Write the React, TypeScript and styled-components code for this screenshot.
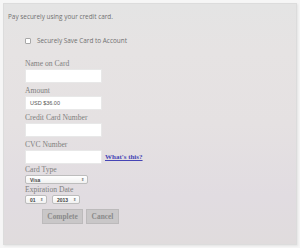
import React from "react";
import styled, { createGlobalStyle } from "styled-components";

const Global = createGlobalStyle`
  html, body { margin: 0; padding: 0; background: #f6f6f6; }
  body { width: 300px; height: 248px; overflow: hidden; }
`;

const Panel = styled.div`
  box-sizing: border-box;
  margin: 3px 0 0 3px;
  width: 294px;
  height: 242px;
  border: 1px solid #dcdcdc;
  background: linear-gradient(180deg, #e4e4e4 0%, #e6e3e3 20%, #e5e1e2 50%, #e1dce1 80%, #e0dcdd 100%);
  box-shadow: 1px 1px 2px rgba(0,0,0,0.08);
  padding: 8px 0 0 4px;
  display: flex;
  flex-direction: column;
`;

const Intro = styled.div`
  font-family: "Open Sans", "Noto Sans", sans-serif;
  font-size: 6.4px;
  color: #707070;
  line-height: 9px;
`;

const Form = styled.div`
  display: flex;
  flex-direction: column;
  padding-left: 17px;
`;

const SaveRow = styled.label`
  display: flex;
  align-items: center;
  gap: 6px;
  margin-top: 15px;
  font-family: "Open Sans", "Noto Sans", sans-serif;
  font-size: 6.4px;
  color: #707070;
  height: 9px;
`;

const Box = styled.span`
  box-sizing: border-box;
  width: 6px;
  height: 6px;
  border: 1px solid #a8a8a8;
  background: #fff;
  border-radius: 1px;
`;

const Label = styled.div<{ $top: number }>`
  font-family: "Liberation Serif", serif;
  font-size: 7.6px;
  color: #808080;
  line-height: 9px;
  margin-top: ${(p) => p.$top}px;
`;

const FieldRow = styled.div`
  display: flex;
  align-items: center;
  gap: 3px;
  margin-top: 1px;
`;

const Input = styled.div`
  box-sizing: border-box;
  width: 77px;
  height: 14px;
  background: #fff;
  border: 1px solid #e8e8e8;
  font-family: "Liberation Sans", sans-serif;
  font-size: 5.5px;
  color: #555;
  padding-left: 4px;
  display: flex;
  align-items: center;
`;

const Link = styled.a`
  font-family: "Liberation Serif", serif;
  font-weight: bold;
  font-size: 7px;
  color: #4545b5;
  text-decoration: underline;
`;

const Select = styled.div<{ $w: number }>`
  box-sizing: border-box;
  width: ${(p) => p.$w}px;
  height: 9px;
  background: linear-gradient(#ffffff, #f1f1f1);
  border: 1px solid #bdbdbd;
  border-radius: 2px;
  font-family: "Liberation Sans", sans-serif;
  font-weight: bold;
  font-size: 5px;
  color: #444;
  display: flex;
  align-items: center;
  justify-content: space-between;
  padding: 0 3px 0 4px;
`;

const Arrows = styled.span`
  font-size: 4px;
  color: #777;
  line-height: 1;
`;

const SelectRow = styled.div`
  display: flex;
  gap: 5px;
  margin-top: 1px;
`;

const Buttons = styled.div`
  display: flex;
  gap: 3px;
  margin-top: 5px;
  margin-left: 34px;
`;

const Button = styled.div<{ $w: number }>`
  box-sizing: border-box;
  width: ${(p) => p.$w}px;
  height: 15px;
  background: #c9c7c8;
  border: 1px solid #bcbabb;
  font-family: "Liberation Serif", serif;
  font-weight: bold;
  font-size: 7.4px;
  color: #8a8a8a;
  display: flex;
  align-items: center;
  justify-content: center;
`;

const SelectBox = ({ w, value }: { w: number; value: string }) => (
  <Select $w={w}>
    <span>{value}</span>
    <Arrows>⇕</Arrows>
  </Select>
);

export default function App() {
  return (
    <>
      <Global />
      <Panel>
        <Intro>Pay securely using your credit card.</Intro>
        <Form>
          <SaveRow>
            <Box />
            Securely Save Card to Account
          </SaveRow>
          <Label $top={14}>Name on Card</Label>
          <FieldRow>
            <Input />
          </FieldRow>
          <Label $top={3}>Amount</Label>
          <FieldRow>
            <Input>USD $36.00</Input>
          </FieldRow>
          <Label $top={3}>Credit Card Number</Label>
          <FieldRow>
            <Input />
          </FieldRow>
          <Label $top={3}>CVC Number</Label>
          <FieldRow>
            <Input />
            <Link href="#">What's this?</Link>
          </FieldRow>
          <Label $top={1}>Card Type</Label>
          <SelectRow>
            <SelectBox w={63} value="Visa" />
          </SelectRow>
          <Label $top={1}>Expiration Date</Label>
          <SelectRow>
            <SelectBox w={22} value="01" />
            <SelectBox w={28} value="2013" />
          </SelectRow>
        </Form>
        <Buttons>
          <Button $w={41}>Complete</Button>
          <Button $w={33}>Cancel</Button>
        </Buttons>
      </Panel>
    </>
  );
}
